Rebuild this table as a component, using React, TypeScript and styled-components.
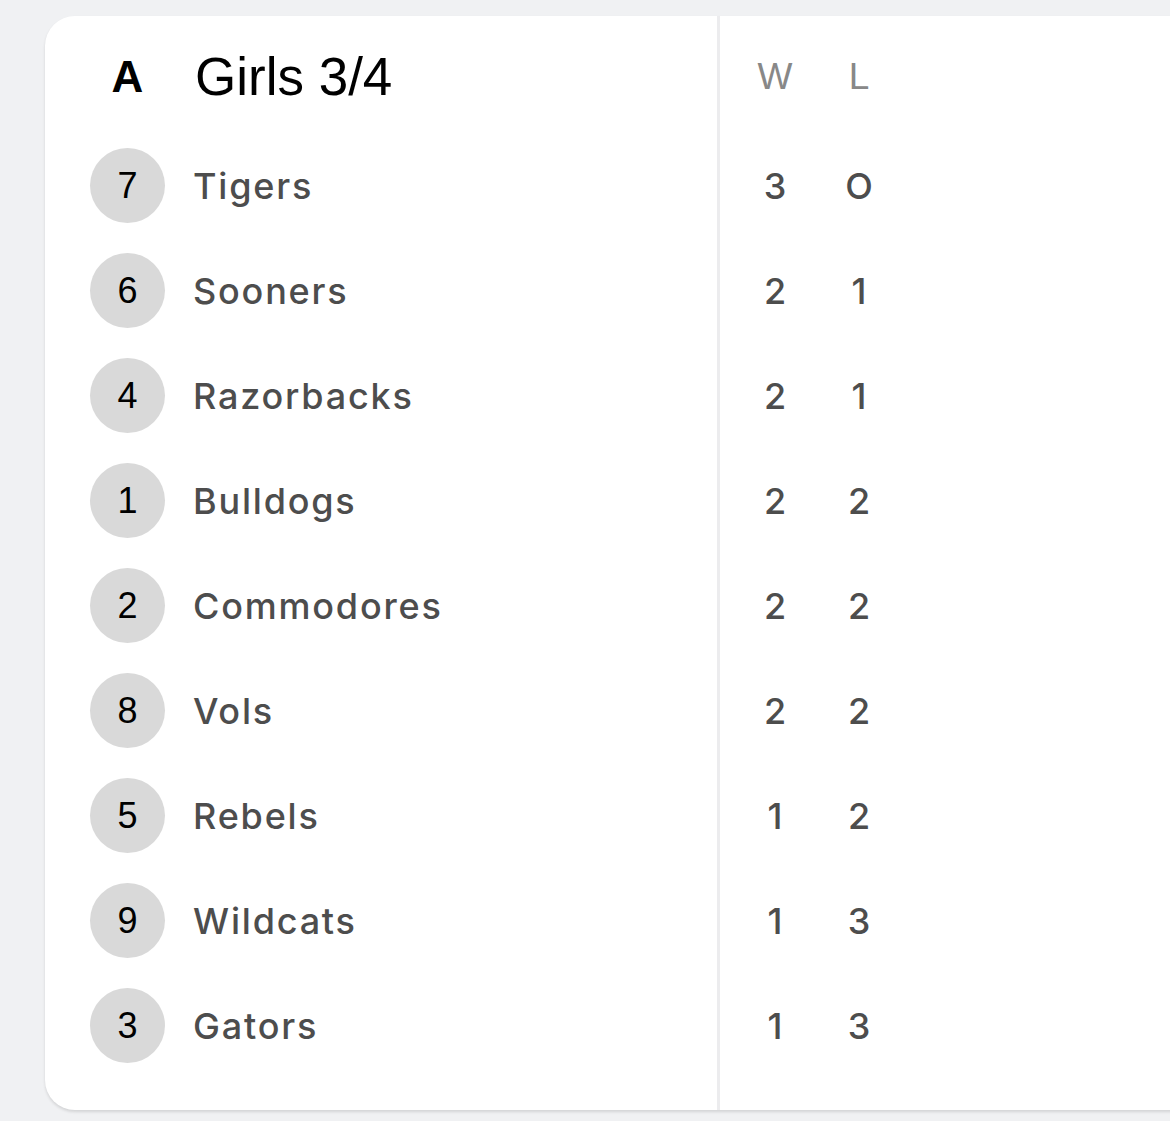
import React from 'react';
import styled, { createGlobalStyle } from 'styled-components';

const GlobalStyle = createGlobalStyle`
  html, body {
    margin: 0;
    padding: 0;
    background: #f0f1f3;
    overflow: hidden;
  }
`;

const Page = styled.div`
  padding: 16px 0 0 45px;
  height: 1121px;
  box-sizing: border-box;
`;

const Card = styled.div`
  display: flex;
  width: 1200px;
  background: #ffffff;
  border-radius: 30px 0 0 30px;
  box-shadow: 0 2px 3px rgba(0, 0, 0, 0.12);
`;

const TeamsColumn = styled.div`
  width: 675px;
  padding: 0 0 32px 45px;
  box-sizing: border-box;
  border-right: 3px solid #ececee;
`;

const RecordColumn = styled.div`
  flex: 1;
  padding: 0 0 32px 25px;
`;

const HeaderRow = styled.div`
  display: flex;
  align-items: center;
  height: 117px;
  padding-top: 4px;
  box-sizing: border-box;
`;

const Row = styled.div`
  display: flex;
  align-items: center;
  height: 105px;
`;

const Pool = styled.div`
  width: 75px;
  text-align: center;
  font-family: 'Liberation Sans', Arial, sans-serif;
  font-weight: 700;
  font-size: 44px;
  color: #000;
`;

const Title = styled.div`
  margin-left: 30px;
  font-family: 'Liberation Sans', Arial, sans-serif;
  font-size: 53px;
  color: #000;
`;

const Seed = styled.div`
  width: 75px;
  height: 75px;
  border-radius: 50%;
  background: #d9d9d9;
  display: flex;
  align-items: center;
  justify-content: center;
  font-family: 'Liberation Sans', Arial, sans-serif;
  font-size: 36px;
  color: #000;
`;

const TeamName = styled.div`
  margin-left: 28px;
  font-family: 'Inter', sans-serif;
  font-weight: 500;
  font-size: 36px;
  letter-spacing: 1.8px;
  color: #4d4d4d;
`;

const Cell = styled.div<{ $head?: boolean }>`
  width: 60px;
  margin-right: 24px;
  text-align: center;
  font-family: ${p => (p.$head ? "'Liberation Sans', Arial, sans-serif" : "'Inter', sans-serif")};
  font-weight: ${p => (p.$head ? 400 : 500)};
  font-size: ${p => (p.$head ? '37px' : '36px')};
  color: ${p => (p.$head ? '#888888' : '#4d4d4d')};
`;

const teams = [
  { seed: 7, name: 'Tigers', w: 3, l: 0 },
  { seed: 6, name: 'Sooners', w: 2, l: 1 },
  { seed: 4, name: 'Razorbacks', w: 2, l: 1 },
  { seed: 1, name: 'Bulldogs', w: 2, l: 2 },
  { seed: 2, name: 'Commodores', w: 2, l: 2 },
  { seed: 8, name: 'Vols', w: 2, l: 2 },
  { seed: 5, name: 'Rebels', w: 1, l: 2 },
  { seed: 9, name: 'Wildcats', w: 1, l: 3 },
  { seed: 3, name: 'Gators', w: 1, l: 3 },
];

const App: React.FC = () => {
  return (
    <Page>
      <GlobalStyle />
      <Card>
        <TeamsColumn>
          <HeaderRow>
            <Pool>A</Pool>
            <Title>Girls 3/4</Title>
          </HeaderRow>
          {teams.map(t => (
            <Row key={t.name}>
              <Seed>{t.seed}</Seed>
              <TeamName>{t.name}</TeamName>
            </Row>
          ))}
        </TeamsColumn>
        <RecordColumn>
          <HeaderRow>
            <Cell $head>W</Cell>
            <Cell $head>L</Cell>
          </HeaderRow>
          {teams.map(t => (
            <Row key={t.name}>
              <Cell>{t.w}</Cell>
              <Cell>{t.l === 0 ? 'O' : t.l}</Cell>
            </Row>
          ))}
        </RecordColumn>
      </Card>
    </Page>
  );
};

export default App;
